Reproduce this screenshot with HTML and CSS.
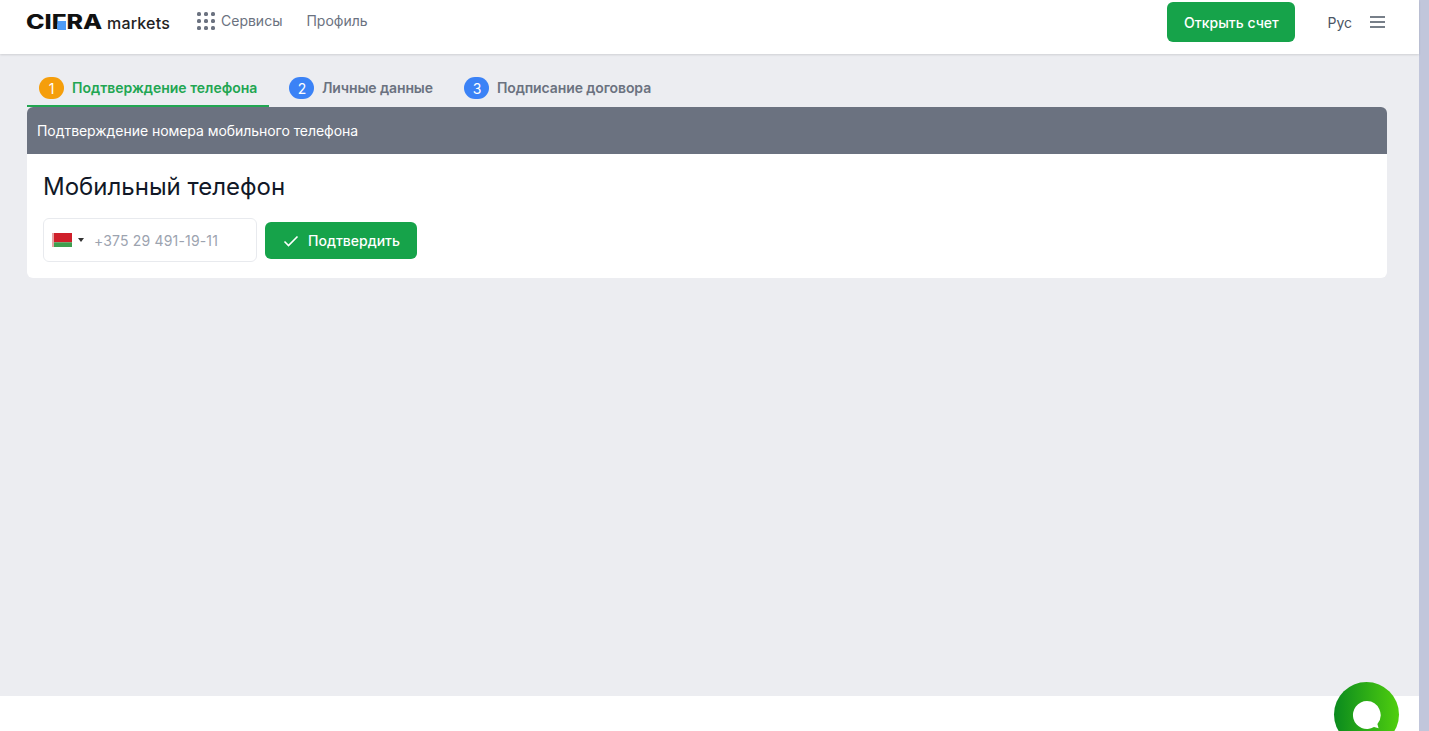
FILE: index.html
```html
<!DOCTYPE html>
<html lang="ru">
<head>
<meta charset="utf-8">
<title>CIFRA markets</title>
<link rel="stylesheet" href="styles.css">
</head>
<body>
<div class="page">
  <div class="content">
    <header class="header">
      <div class="logo"><span class="logo-main">CI<span class="logo-f">F</span>RA</span><span class="logo-sub">markets</span></div>
      <nav class="nav">
        <a class="nav-item">
          <svg class="grid-icon" width="18" height="18" viewBox="0 0 18 18" fill="#6b7280"><rect x="0" y="0" width="4" height="4" rx="1.6"/><rect x="7" y="0" width="4" height="4" rx="1.6"/><rect x="14" y="0" width="4" height="4" rx="1.6"/><rect x="0" y="7" width="4" height="4" rx="1.6"/><rect x="7" y="7" width="4" height="4" rx="1.6"/><rect x="14" y="7" width="4" height="4" rx="1.6"/><rect x="0" y="14" width="4" height="4" rx="1.6"/><rect x="7" y="14" width="4" height="4" rx="1.6"/><rect x="14" y="14" width="4" height="4" rx="1.6"/></svg>
          Сервисы</a>
        <a class="nav-item">Профиль</a>
      </nav>
      <div class="header-right">
        <button class="btn-open">Открыть счет</button>
        <span class="lang">Рус</span>
        <svg class="burger" width="16" height="12" viewBox="0 0 16 12" fill="none" stroke="#4b5563" stroke-width="1.4"><path d="M0 1h15M0 6h15M0 11h15"/></svg>
      </div>
    </header>
    <main class="main">
      <div class="tabs">
        <div class="tab tab-active"><span class="num num-orange">1</span><span class="tab-label">Подтверждение телефона</span></div>
        <div class="tab"><span class="num">2</span><span class="tab-label">Личные данные</span></div>
        <div class="tab"><span class="num">3</span><span class="tab-label">Подписание договора</span></div>
      </div>
      <section class="card">
        <div class="card-head">Подтверждение номера мобильного телефона</div>
        <div class="card-body">
          <h1 class="title">Мобильный телефон</h1>
          <div class="form-row">
            <div class="phone">
              <svg class="flag" width="20" height="14" viewBox="0 0 20 14"><rect width="20" height="9.3" fill="#cf1f2a"/><rect y="9.3" width="20" height="4.7" fill="#3f9f4f"/><rect width="2" height="14" fill="#e8a4a4"/></svg>
              <span class="caret"></span>
              <span class="placeholder">+375 29 491-19-11</span>
            </div>
            <button class="btn-confirm">
              <svg width="16" height="12" viewBox="0 0 16 12" fill="none" stroke="#fff" stroke-width="1.6"><path d="M1.5 6.5l4 4 9-9"/></svg>
              Подтвердить</button>
          </div>
        </div>
      </section>
    </main>
    <footer class="footer"></footer>
  </div>
  <div class="scrollbar"></div>
</div>
<div class="chat">
  <svg width="34" height="34" viewBox="0 0 34 34"><path d="M17 3a14 14 0 1 0 7 26.1l4.6 1.2-1.2-4.4A14 14 0 0 0 17 3z" fill="#fff"/></svg>
</div>
</body>
</html>
```
FILE: styles.css
```css
* { box-sizing: border-box; }
html, body { margin: 0; height: 100%; overflow: hidden; }
body { font-family: Inter, "Liberation Sans", sans-serif; color: #111827; background: #fff; }
.page { display: flex; height: 731px; }
.content { flex: 1; display: flex; flex-direction: column; min-width: 0; }
.scrollbar { width: 10px; background: #c1c6db; }

.header { height: 54px; flex: none; background: #fff; display: flex; align-items: center; padding: 0 33px 10px 26px; box-shadow: 0 1px 2px rgba(0,0,0,.12); position: relative; }
.logo { display: flex; align-items: baseline; width: 171px; flex: none; margin-top: -1px; }
.logo-main { display: inline-block; width: 81px; font-size: 20px; font-weight: 800; color: #111; transform: scaleX(1.25); transform-origin: left; }
.logo-f { position: relative; color: #111; }
.logo-f::after { content: ""; position: absolute; left: 4px; top: 11px; width: 7px; height: 9px; background: #4f9bf5; }
.logo-sub { font-size: 16px; font-weight: 500; letter-spacing: 0.2px; color: #222; }
.nav { display: flex; align-items: center; gap: 24px; margin-top: -4px; }
.nav-item { display: flex; align-items: center; gap: 6px; font-size: 14px; color: #6b7280; }
.grid-icon { margin-top: 2px; }
.header-right { margin-left: auto; display: flex; align-items: center; }
.btn-open { width: 128px; height: 40px; border: 0; border-radius: 6px; background: #16a34a; color: #fff; font: 500 14px Inter, "Liberation Sans", sans-serif; }
.lang { font-size: 14px; color: #4b5563; margin-left: 32px; }
.burger { margin-left: 18px; }

.main { flex: 1; background: #ecedf1; padding: 17px 32px 0 27px; }
.tabs { display: flex; height: 36px; }
.tab { display: flex; align-items: center; gap: 7.5px; height: 36px; padding: 0 12px; margin-right: 7.5px; font-size: 14px; font-weight: 600; letter-spacing: -0.1px; color: #6b7280; border-bottom: 2px solid transparent; }
.tab-active { color: #22a652; border-bottom-color: #22a652; letter-spacing: 0; gap: 8px; margin-right: 8px; }
.tab-label { margin-bottom: 2px; }
.num { width: 25px; height: 22px; border-radius: 11px; background: #3b82f6; color: #fff; font-size: 14px; font-weight: 400; display: flex; align-items: center; justify-content: center; }
.num-orange { background: #f59e0b; }
.card { background: #fff; border-radius: 6px; overflow: hidden; height: 171px; }
.card-head { height: 47px; background: #6b7280; color: #fff; font-size: 14px; letter-spacing: -0.05px; display: flex; align-items: center; padding-left: 10px; }
.card-body { padding: 17px 16px 16px; }
.title { margin: 0 0 15px; font-size: 24px; font-weight: 400; line-height: 32px; color: #111827; }
.form-row { display: flex; align-items: center; gap: 8px; }
.phone { width: 214px; height: 44px; border: 1px solid #e8eaee; border-radius: 6px; background: #fff; display: flex; align-items: center; padding-left: 8px; }
.caret { width: 0; height: 0; border: 3px solid transparent; border-top: 4px solid #333; border-bottom: 0; margin-left: 6px; }
.placeholder { margin-left: 10px; font-size: 14px; letter-spacing: 0.17px; color: #9ca3af; }
.btn-confirm { width: 152px; height: 37px; margin-top: 1px; padding: 0 0 0 1px; border: 0; border-radius: 6px; background: #16a34a; color: #fff; font: 500 14px Inter, "Liberation Sans", sans-serif; display: flex; align-items: center; justify-content: center; gap: 9px; }
.footer { height: 35px; flex: none; background: #fff; }
.chat { position: absolute; left: 1334px; top: 682px; width: 65px; height: 65px; border-radius: 50%; background: linear-gradient(90deg, #0a8a1e, #50cf0e); display: flex; align-items: center; justify-content: center; }
```
